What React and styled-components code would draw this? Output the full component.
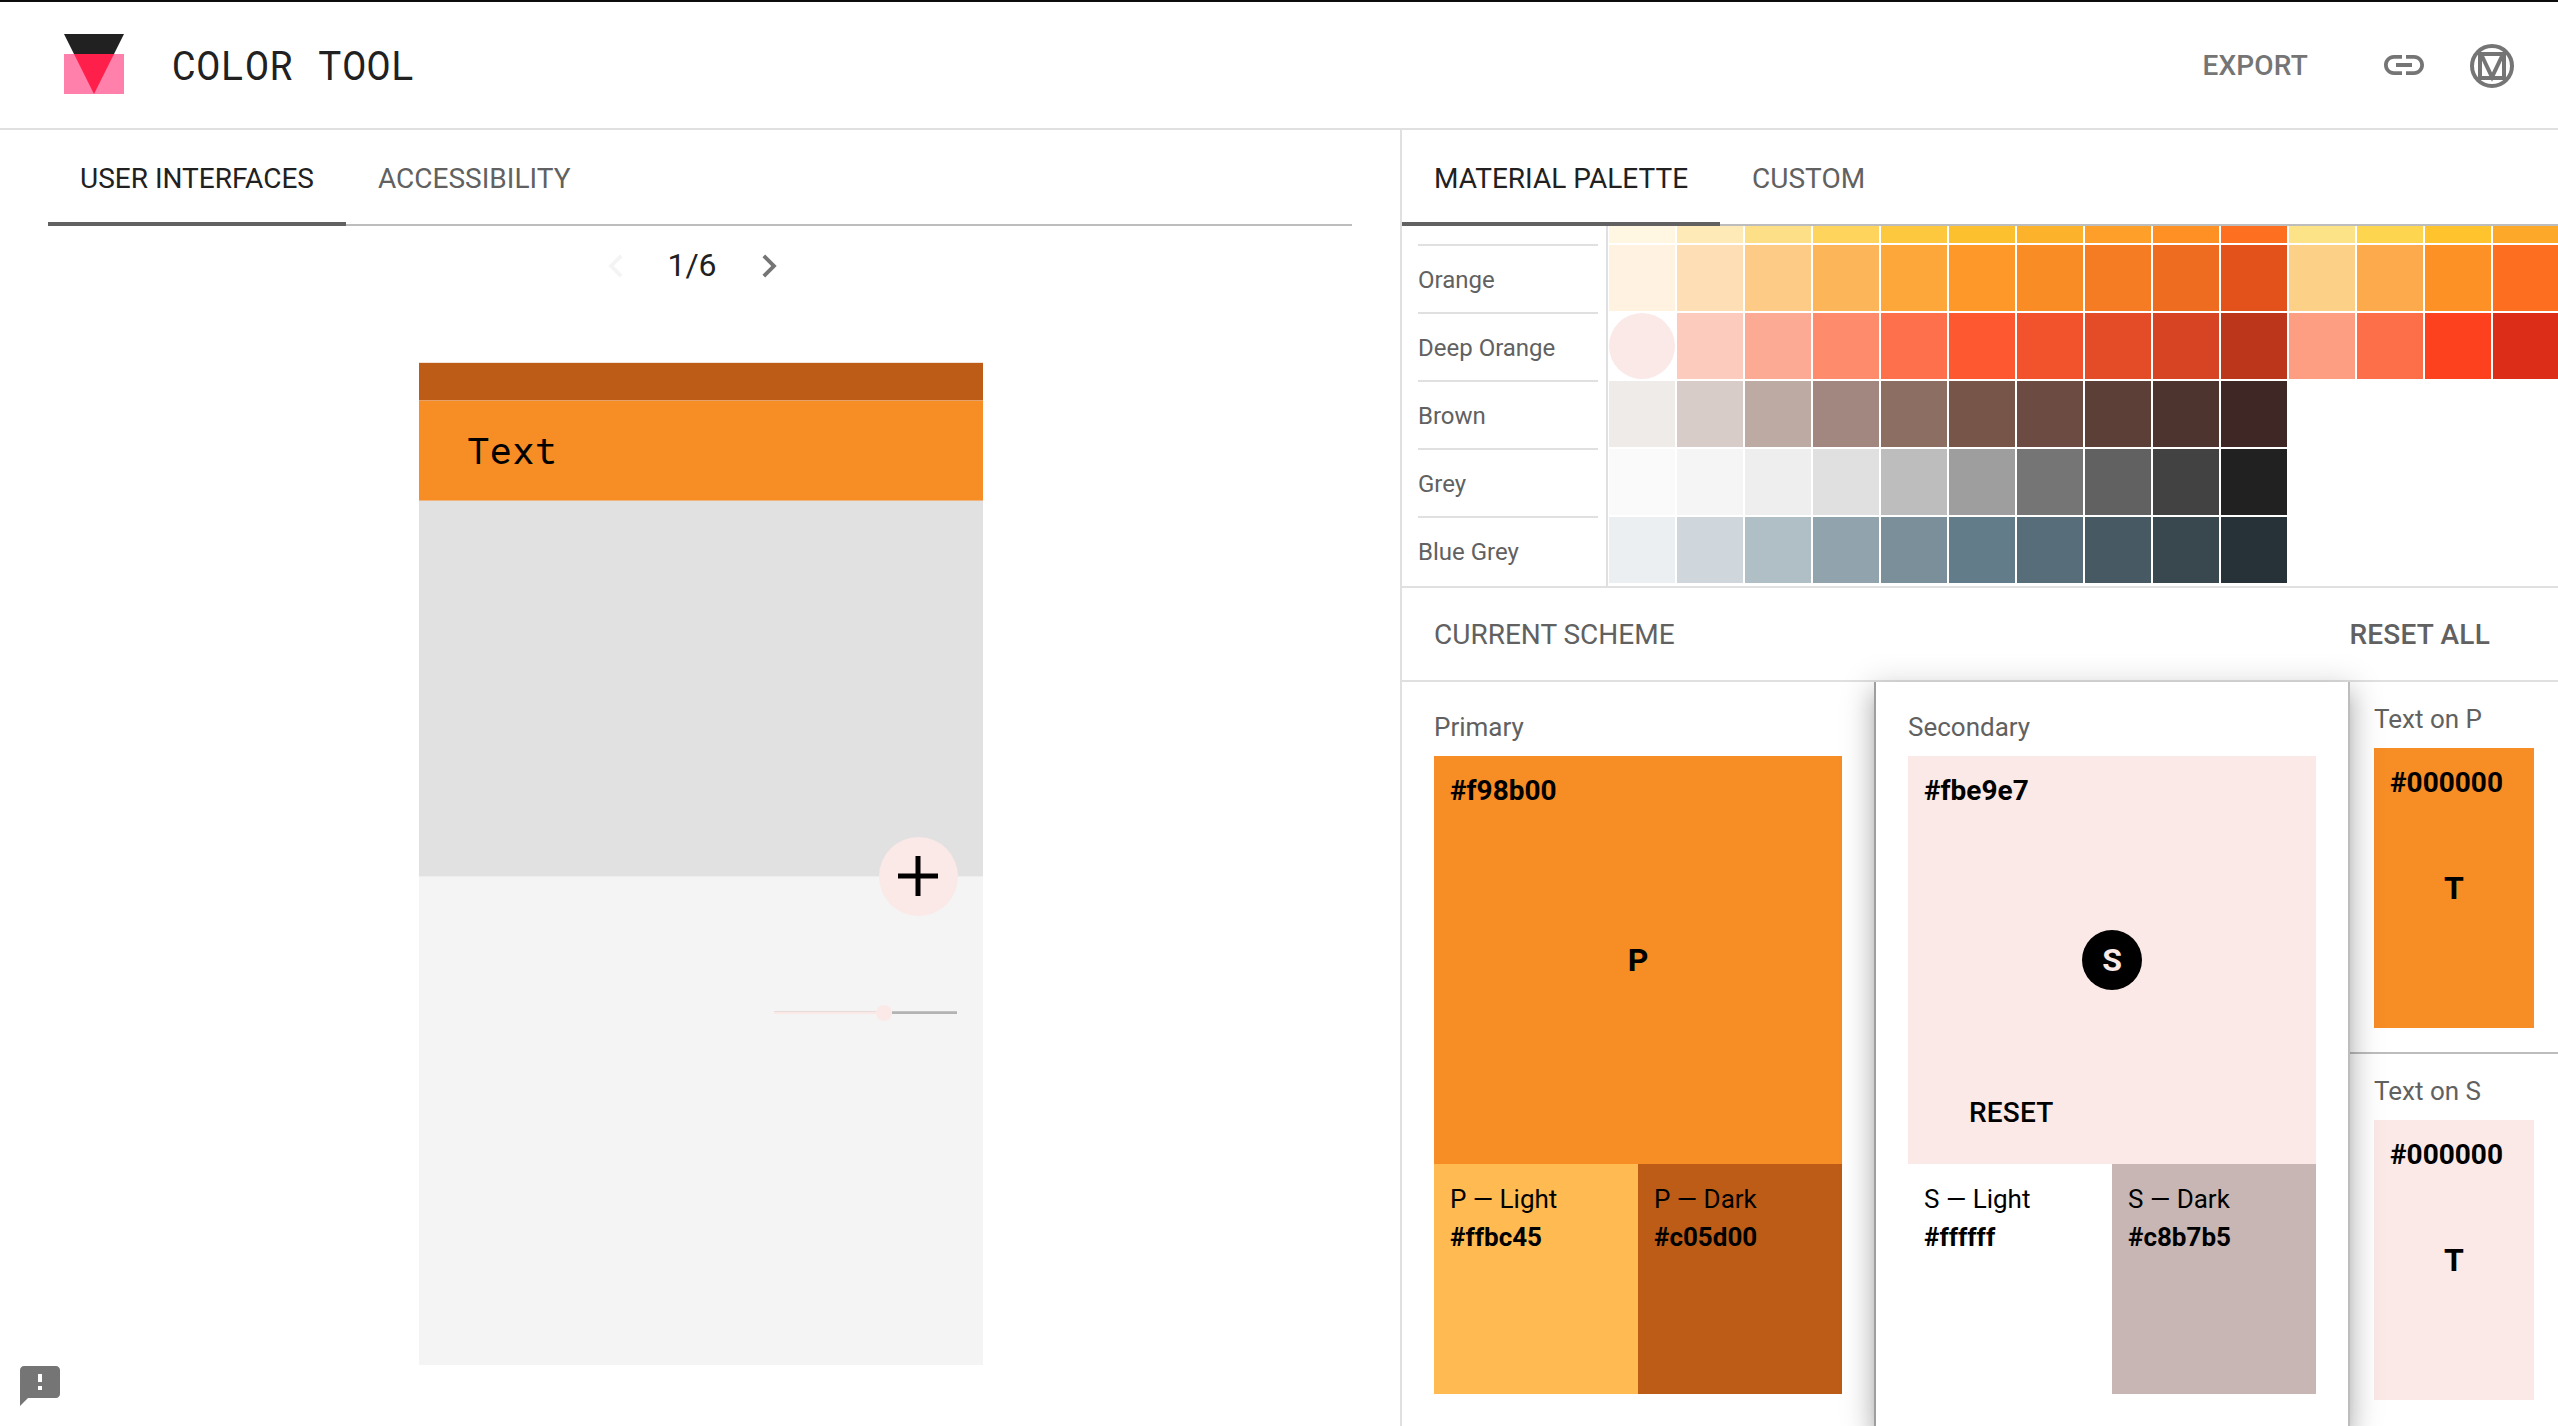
import React from 'react';
import styled, { createGlobalStyle } from 'styled-components';

const GlobalStyle = createGlobalStyle`
  *, *::before, *::after { box-sizing: border-box; }
  html, body { margin: 0; padding: 0; }
  body {
    background: #fff;
    color: #212121;
    font-family: Roboto, "Liberation Sans", sans-serif;
    overflow: hidden;
  }
`;

const mono = '"Roboto Mono", "Liberation Mono", monospace';

const colors = {
  primary: '#f78d25',
  primaryLight: '#ffbb51',
  primaryDark: '#bd5c17',
  secondary: '#fae9e7',
  secondaryLight: '#ffffff',
  secondaryDark: '#c8b6b4',
};

const Page = styled.div`
  display: flex;
  flex-direction: column;
  width: 2558px;
  height: 1426px;
  border-top: 2px solid #0d0d0d;
  overflow: hidden;
`;

const Header = styled.header`
  display: flex;
  align-items: center;
  flex: none;
  height: 128px;
  padding: 0 42px 0 64px;
  border-bottom: 2px solid #e0e0e0;
`;

const Logo = styled.svg`
  display: block;
  flex: none;
  width: 60px;
  height: 60px;
  margin-bottom: 2px;
`;

const Title = styled.h1`
  flex: 1;
  margin: 0 0 0 48px;
  font: 400 40px/56px ${mono};
  letter-spacing: 0.3px;
  color: #212121;
`;

const TextButton = styled.button`
  margin: 0;
  padding: ${(p) => p.$nudge || 0}px 0 0;
  border: 0;
  background: none;
  font: 500 28px/36px Roboto, "Liberation Sans", sans-serif;
  letter-spacing: 0.2px;
  color: ${(p) => p.$color || '#757575'};
`;

const Icon = styled.svg`
  display: block;
  flex: none;
  width: ${(p) => p.$size || 48}px;
  height: ${(p) => p.$size || 48}px;
  fill: ${(p) => p.$color || '#757575'};
  margin-left: ${(p) => p.$gap || 0}px;
`;

const Body = styled.main`
  display: flex;
  flex: 1;
  min-height: 0;
`;

const PreviewPane = styled.section`
  display: flex;
  flex-direction: column;
  width: 1400px;
  padding: 0 48px;
`;

const ToolPane = styled.section`
  display: flex;
  flex-direction: column;
  flex: 1;
  min-width: 0;
  border-left: 2px solid #e0e0e0;
`;

const TabBar = styled.nav`
  display: flex;
  flex: none;
  height: 96px;
  box-shadow: inset 0 -2px #bdbdbd;
`;

const Tab = styled.a`
  height: 96px;
  padding: 0 32px;
  font-size: 28px;
  line-height: 98px;
  color: ${(p) => (p.$active ? '#212121' : '#616161')};
  box-shadow: ${(p) => (p.$active ? 'inset 0 -4px #616161' : 'none')};
`;

const Pager = styled.div`
  display: flex;
  align-items: center;
  justify-content: center;
  height: 80px;
  padding-right: 16px;
  font-size: 32px;
`;

const PageCount = styled.span`
  width: 107px;
  padding-bottom: 2px;
  text-align: center;
`;

const Device = styled.div`
  display: flex;
  flex-direction: column;
  width: 564px;
  height: 1003px;
  margin: 56px auto 0 371px;
  background: #f4f4f4;
`;

const StatusBar = styled.div`
  height: 39px;
  border-top: 1px solid #f4e2d6;
  border-bottom: 1px solid #e5a169;
  background: ${colors.primaryDark};
`;

const AppBar = styled.div`
  display: flex;
  align-items: center;
  height: 100px;
  padding: 0 0 2px 48px;
  border-bottom: 1px solid #f0b57f;
  background: ${colors.primary};
  color: #000;
  font: 400 37.5px/50px ${mono};
`;

const MediaArea = styled.div`
  position: relative;
  height: 376px;
  border-bottom: 1px solid #ededed;
  background: #e1e1e1;
`;

const Fab = styled.div`
  position: absolute;
  right: 25px;
  bottom: -40px;
  width: 79px;
  height: 79px;
  padding: 0 1px 2px 0;
  border-radius: 50%;
  background: ${colors.secondary};
  display: flex;
  align-items: center;
  justify-content: center;
`;

const Slider = styled.div`
  display: flex;
  align-items: center;
  height: 16px;
  width: 183px;
  margin: 128px 26px 0 auto;
`;

const SliderTrack = styled.div`
  width: ${(p) => p.$width}px;
  height: 3px;
  margin-bottom: 1px;
  border-top: 1px solid ${(p) => p.$edge};
  background: ${(p) => p.$color};
`;

const SliderThumb = styled.div`
  width: 16px;
  height: 16px;
  border-radius: 50%;
  background: ${colors.secondary};
`;

const Feedback = styled.div`
  position: absolute;
  left: 16px;
  top: 1362px;
`;

const Palette = styled.div`
  display: flex;
  flex-direction: column;
  justify-content: flex-end;
  flex: none;
  height: 362px;
  border-bottom: 2px solid #e0e0e0;
  overflow: hidden;
`;

const PaletteRow = styled.div`
  display: flex;
  flex: none;
  height: 68px;
  &:last-child { height: 70px; }
`;

const PaletteLabel = styled.div`
  flex: none;
  width: 206px;
  padding: 0 8px 0 16px;
  border-right: 2px solid #e0e0e0;
  & > span {
    display: block;
    height: 68px;
    border-top: 2px solid #e0e0e0;
    font-size: 24px;
    line-height: 69px;
    color: #616161;
  }
`;

const Swatch = styled.div`
  flex: none;
  width: 66px;
  height: 66px;
  margin: 1px;
  border-radius: ${(p) => (p.$selected ? '50%' : 0)};
  background: ${(p) => p.$color};
`;

const SchemeHeader = styled.div`
  display: flex;
  align-items: center;
  justify-content: space-between;
  flex: none;
  height: 94px;
  padding: 0 68px 0 32px;
  border-bottom: 2px solid #e0e0e0;
  font-size: 28px;
  color: #616161;
`;

const Scheme = styled.div`
  display: flex;
  flex: 1;
`;

const SchemeColumn = styled.div`
  display: flex;
  flex-direction: column;
  flex: none;
  width: ${(p) => (p.$raised ? 476 : 472)}px;
  padding: 36px 32px 0;
  ${(p) =>
    p.$raised &&
    `
    position: relative;
    z-index: 1;
    background: #fff;
    border-left: 2px solid #9e9e9e;
    border-right: 2px solid #bdbdbd;
    box-shadow:
      0 16px 20px 2px rgba(0, 0, 0, 0.14),
      0 6px 30px 4px rgba(0, 0, 0, 0.17),
      0 10px 10px -6px rgba(0, 0, 0, 0.2);
  `}
`;

const ColumnLabel = styled.div`
  height: 38px;
  font-size: 26px;
  line-height: 18px;
  color: #616161;
`;

const MainSwatch = styled.div`
  display: grid;
  grid-template-rows: 1fr 60px 1fr;
  height: ${(p) => p.$height || 408}px;
  padding: 16px;
  background: ${(p) => p.$color};
  color: #000;
`;

const Hex = styled.strong`
  font-size: ${(p) => p.$size || 28}px;
  line-height: 38px;
  font-weight: 700;
`;

const Glyph = styled.div`
  justify-self: center;
  width: 60px;
  height: 60px;
  border-radius: 50%;
  background: ${(p) => (p.$filled ? '#000' : 'transparent')};
  color: ${(p) => (p.$filled ? colors.secondary : '#000')};
  font-size: 32px;
  font-weight: 700;
  line-height: 60px;
  text-align: center;
`;

const ResetSlot = styled.div`
  display: flex;
  align-items: flex-end;
  padding: 0 0 17px 45px;
`;

const Variants = styled.div`
  display: flex;
`;

const Variant = styled.div`
  display: flex;
  flex-direction: column;
  width: 204px;
  height: 230px;
  padding: 16px;
  background: ${(p) => p.$color};
  color: #000;
  font-size: 26px;
  line-height: 38px;
`;

const TextColumns = styled.div`
  display: flex;
  flex-direction: column;
  flex: 1;
`;

const TextCell = styled.div`
  height: 372px;
  padding: 28px 24px 0;
  &:first-child { box-shadow: inset 0 -2px #bdbdbd; }
`;

const paletteRows = [
  ['', ['#fff7e1', '#feeab6', '#fddf87', '#fed45c', '#fec83e', '#fcc02e', '#fcb22b', '#fe9f29', '#fe9024', '#fe7020', '#fde388', '#fdd54f', '#fec32d', '#fda828']],
  ['Orange', ['#fff2e0', '#fedeb5', '#fdcb86', '#fcb558', '#fda639', '#fe9828', '#fa8c25', '#f57c22', '#ed6c20', '#e3521a', '#fdd087', '#fdaa4d', '#fe9125', '#fd6e20']],
  ['Deep Orange', ['#fae9e7', '#fdcbbd', '#fdaa94', '#fe8b6c', '#fe704b', '#fe5830', '#f2522c', '#e44c28', '#d64424', '#bb361a', '#fd9e82', '#fd6f48', '#fd401e', '#db2d17']],
  ['Brown', ['#efebe8', '#d7ccc8', '#bcaaa3', '#a1877f', '#8c6e63', '#785549', '#6c4c42', '#5c4037', '#4d342f', '#3e2724']],
  ['Grey', ['#fafafa', '#f5f5f5', '#eeeeee', '#e0e0e0', '#bdbdbd', '#9e9e9e', '#757575', '#616161', '#424242', '#212121']],
  ['Blue Grey', ['#ebeff2', '#cfd7dd', '#b0bec5', '#91a3ac', '#7a8f99', '#627d89', '#576e7a', '#475a63', '#39474f', '#273238']],
];

const schemes = [
  { name: 'Primary', letter: 'P', hex: '#f98b00', color: colors.primary, light: ['#ffbc45', colors.primaryLight], dark: ['#c05d00', colors.primaryDark] },
  { name: 'Secondary', letter: 'S', hex: '#fbe9e7', color: colors.secondary, light: ['#ffffff', colors.secondaryLight], dark: ['#c8b7b5', colors.secondaryDark], selected: true },
];

const textCells = [
  ['Text on P', colors.primary],
  ['Text on S', colors.secondary],
];

export default function App() {
  return (
    <>
      <GlobalStyle />
      <Page>
        <Header>
          <Logo viewBox="0 0 60 60">
            <path d="M0 0h60L30 60z" fill="#212121" />
            <path d="M0 20h60v40H0z" fill="#ff80ab" />
            <path d="M10 20h40L30 60z" fill="#ff1f4b" />
          </Logo>
          <Title>COLOR TOOL</Title>
          <TextButton $nudge={2}>EXPORT</TextButton>
          <Icon viewBox="0 0 24 24" $gap={72}>
            <path d="M3.9 12c0-1.71 1.39-3.1 3.1-3.1h4V7H7c-2.76 0-5 2.24-5 5s2.24 5 5 5h4v-1.9H7c-1.71 0-3.1-1.39-3.1-3.1zM8 13h8v-2H8v2zm9-6h-4v1.9h4c1.71 0 3.1 1.39 3.1 3.1s-1.39 3.1-3.1 3.1h-4V17h4c2.76 0 5-2.24 5-5s-2.24-5-5-5z" />
          </Icon>
          <Icon viewBox="0 -1 48 48" $gap={40}>
            <g fill="none" stroke="#757575" strokeWidth="4">
              <circle cx="24" cy="24" r="20" />
              <path d="M12 12h24v24H12z" />
              <path d="M13 12l11 23 11-23" />
            </g>
          </Icon>
        </Header>
        <Body>
          <PreviewPane>
            <TabBar>
              <Tab $active>USER INTERFACES</Tab>
              <Tab>ACCESSIBILITY</Tab>
            </TabBar>
            <Pager>
              <Icon viewBox="0 0 24 24" $size={46} $color="#f4f4f4">
                <path d="M15.41 7.41L14 6l-6 6 6 6 1.41-1.41L10.83 12z" />
              </Icon>
              <PageCount>1/6</PageCount>
              <Icon viewBox="0 0 24 24" $size={46}>
                <path d="M10 6L8.59 7.41 13.17 12l-4.58 4.59L10 18l6-6z" />
              </Icon>
            </Pager>
            <Device>
              <StatusBar />
              <AppBar>Text</AppBar>
              <MediaArea>
                <Fab>
                  <svg width="40" height="40" viewBox="0 0 40 40">
                    <path d="M17.5 0h5v17.5H40v5H22.5V40h-5V22.5H0v-5h17.5z" />
                  </svg>
                </Fab>
              </MediaArea>
              <Slider>
                <SliderTrack $width={102} $color={colors.secondary} $edge="#e8dcda" />
                <SliderThumb />
                <SliderTrack $width={65} $color="#b3b3b3" $edge="#c2c2c2" />
              </Slider>
            </Device>
            <Feedback>
              <Icon viewBox="0 0 24 24">
                <path d="M20 2H4c-1.1 0-1.99.9-1.99 2L2 22l4-4h14c1.1 0 2-.9 2-2V4c0-1.1-.9-2-2-2zm-7 12h-2v-2h2v2zm0-4h-2V6h2v4z" />
              </Icon>
            </Feedback>
          </PreviewPane>
          <ToolPane>
            <TabBar>
              <Tab $active>MATERIAL PALETTE</Tab>
              <Tab>CUSTOM</Tab>
            </TabBar>
            <Palette>
              {paletteRows.map(([name, shades]) => (
                <PaletteRow key={name}>
                  <PaletteLabel><span>{name}</span></PaletteLabel>
                  {shades.map((shade, i) => (
                    <Swatch key={shade} $color={shade} $selected={name === 'Deep Orange' && i === 0} />
                  ))}
                </PaletteRow>
              ))}
            </Palette>
            <SchemeHeader>
              <span>CURRENT SCHEME</span>
              <TextButton $nudge={2} $color="#616161">RESET ALL</TextButton>
            </SchemeHeader>
            <Scheme>
              {schemes.map((s) => (
                <SchemeColumn key={s.name} $raised={s.selected}>
                  <ColumnLabel>{s.name}</ColumnLabel>
                  <MainSwatch $color={s.color}>
                    <Hex>{s.hex}</Hex>
                    <Glyph $filled={s.selected}>{s.letter}</Glyph>
                    {s.selected && (
                      <ResetSlot><TextButton $color="#000">RESET</TextButton></ResetSlot>
                    )}
                  </MainSwatch>
                  <Variants>
                    <Variant $color={s.light[1]}>
                      <span>{s.letter} — Light</span>
                      <Hex $size={26}>{s.light[0]}</Hex>
                    </Variant>
                    <Variant $color={s.dark[1]}>
                      <span>{s.letter} — Dark</span>
                      <Hex $size={26}>{s.dark[0]}</Hex>
                    </Variant>
                  </Variants>
                </SchemeColumn>
              ))}
              <TextColumns>
                {textCells.map(([label, color]) => (
                  <TextCell key={label}>
                    <ColumnLabel>{label}</ColumnLabel>
                    <MainSwatch $color={color} $height={280}>
                      <Hex>#000000</Hex>
                      <Glyph>T</Glyph>
                    </MainSwatch>
                  </TextCell>
                ))}
              </TextColumns>
            </Scheme>
          </ToolPane>
        </Body>
      </Page>
    </>
  );
}
